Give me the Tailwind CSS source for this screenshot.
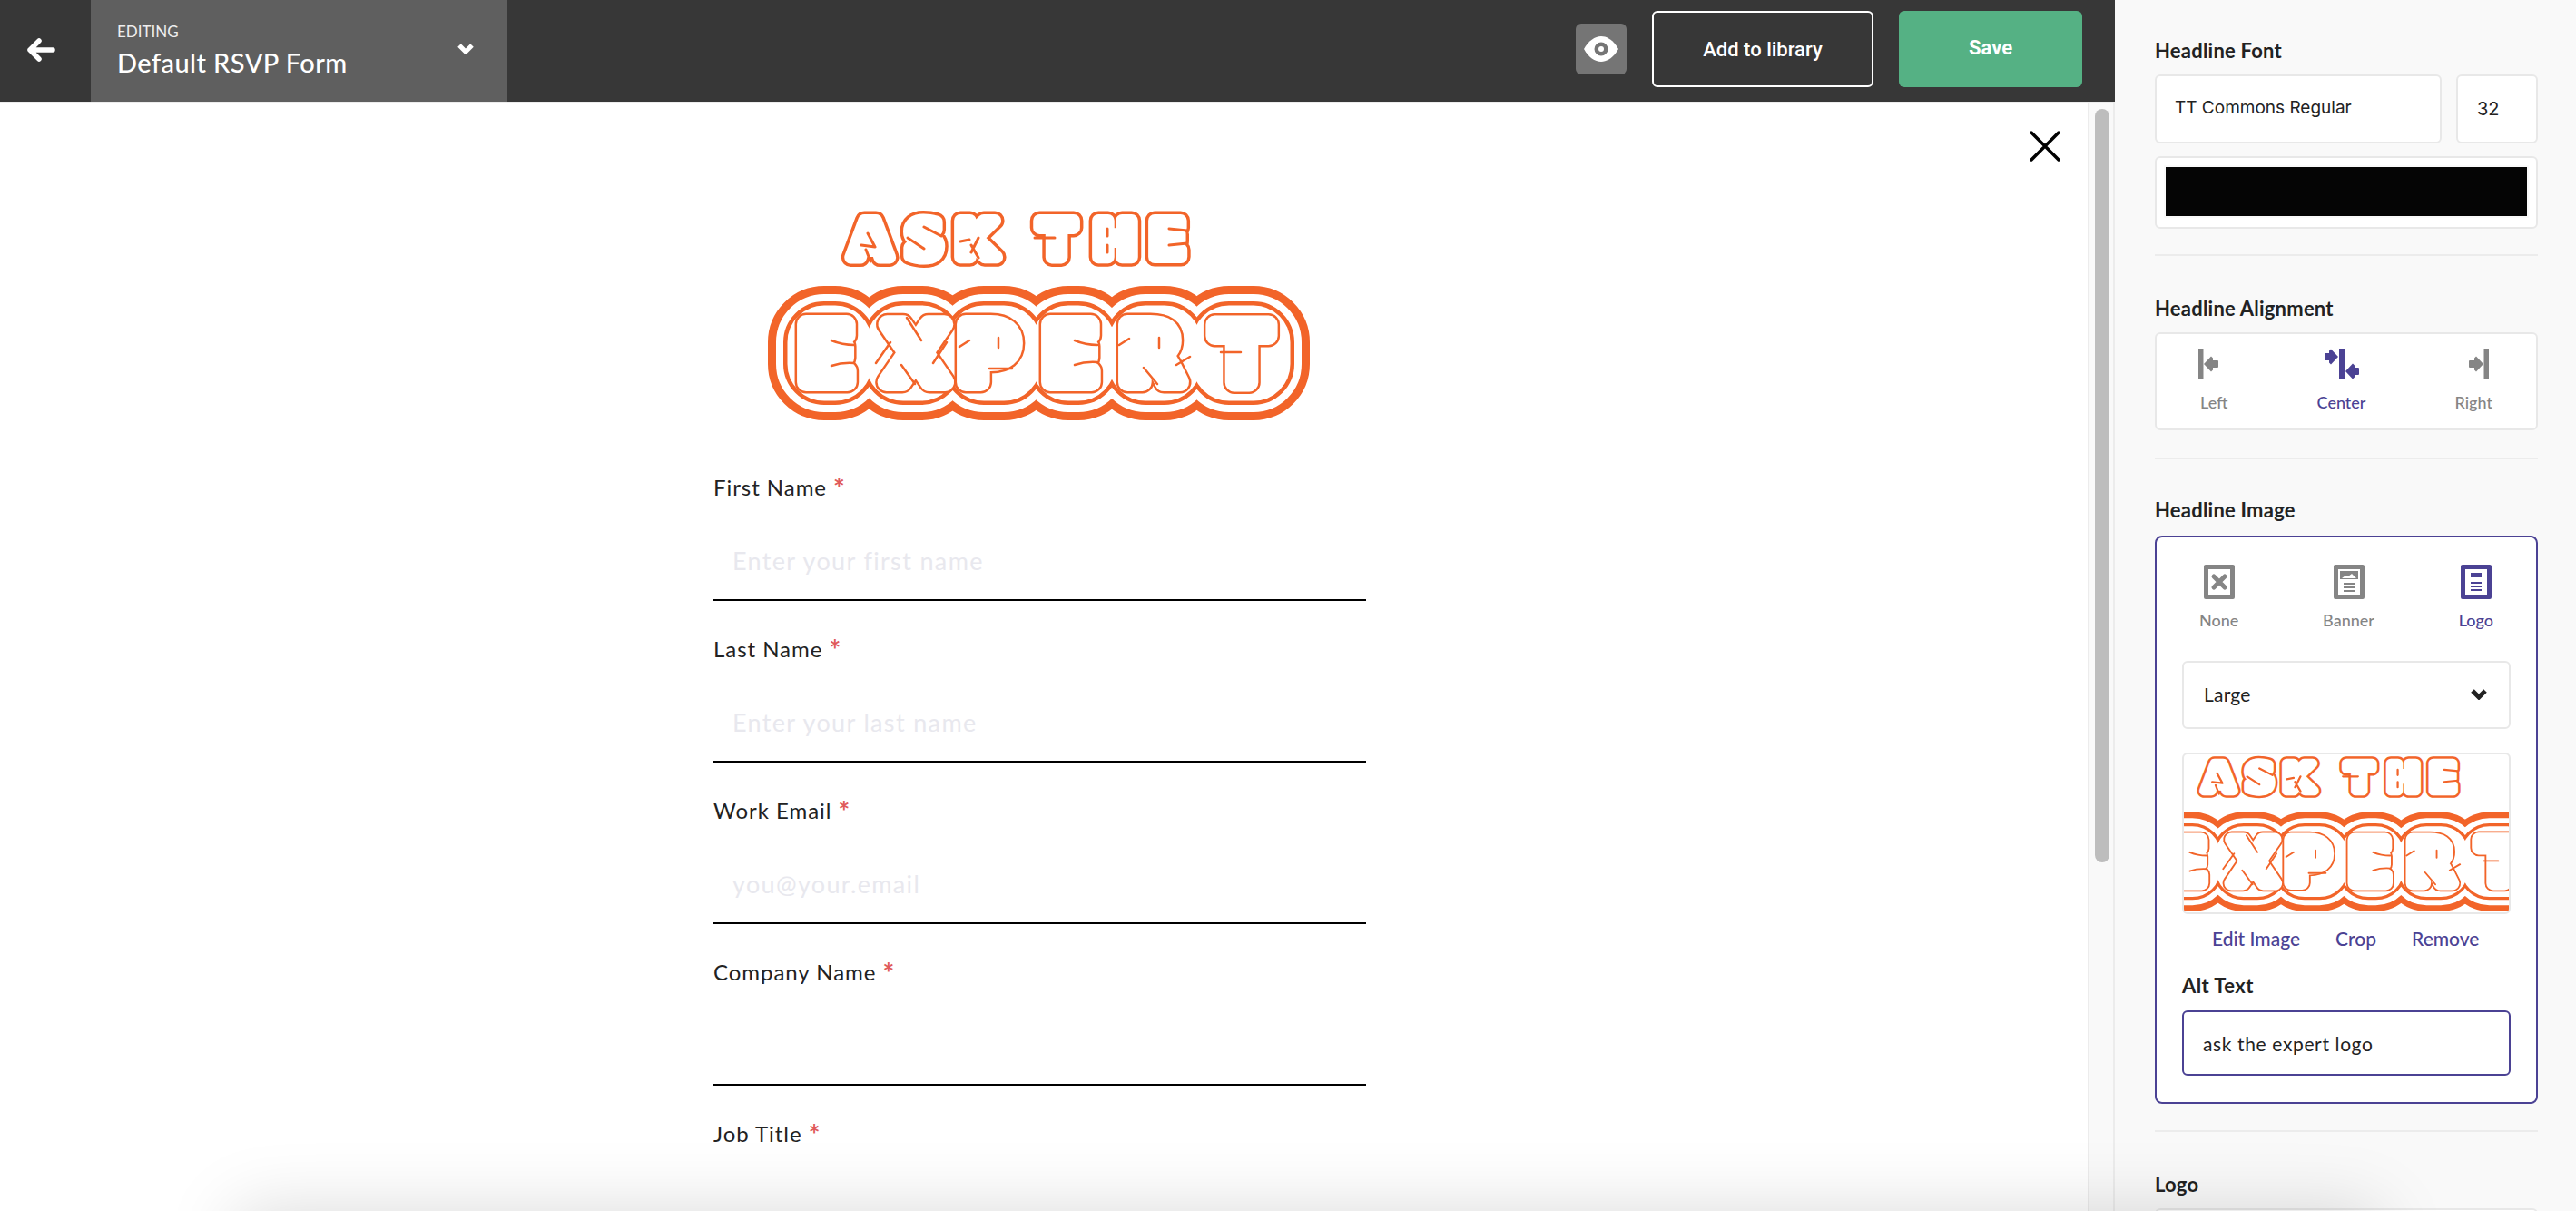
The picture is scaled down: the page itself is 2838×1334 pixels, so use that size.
<!DOCTYPE html>
<html lang="en">

<head>
    <meta charset="UTF-8">
    <title>Default RSVP Form</title>
    <script src="https://cdn.jsdelivr.net/npm/@tailwindcss/browser@4"></script>
</head>

<body class="bg-white">
    <div class="relative flex h-[1334px] w-[2838px] overflow-hidden font-['Lato',sans-serif]">

        <!-- editor column -->
        <div class="flex h-full w-[2330px] flex-col">
            <header class="flex h-[112px] shrink-0 items-center bg-[#373737] text-white">
                <button class="flex h-full w-[100px] items-center justify-center pb-[3px] pr-[11px]">
                    <svg class="h-[26px] w-[32px]" viewBox="0 0 32 26" fill="none" stroke="white" stroke-width="5.5" stroke-linecap="round" stroke-linejoin="round">
                        <path d="M29 13H4M14 3L4 13l10 10" />
                    </svg>
                </button>
                <div class="flex h-full w-[459px] items-center justify-between bg-[#5f5f5f] pl-[29px] pr-[37px]">
                    <div class="mt-[-3px] flex flex-col">
                        <span class="h-[24px] text-[17px] leading-[24px] text-[#eeeeee]">EDITING</span>
                        <span class="mt-[4px] h-[36px] text-[29px] font-medium leading-[36px] tracking-[0.015em]">Default RSVP Form</span>
                    </div>
                    <svg class="mb-[5px] h-[13px] w-[18px]" viewBox="0 0 18 13" fill="none" stroke="white" stroke-width="5">
                        <path d="M2 3l7 7 7-7" />
                    </svg>
                </div>
                <div class="mb-[4px] ml-auto flex items-center pr-[36px]">
                    <button class="flex h-[56px] w-[56px] items-center justify-center rounded-[6px] bg-[#757575]">
                        <svg class="h-[28px] w-[38px]" viewBox="0 0 38 28">
                            <path d="M0 14C5 5 12 0 19 0s14 5 19 14c-5 9-12 14-19 14S5 23 0 14z" fill="white" />
                            <circle cx="19" cy="14" r="7.5" fill="#757575" />
                            <circle cx="19" cy="14" r="3" fill="white" />
                        </svg>
                    </button>
                    <button class="ml-[28px] h-[84px] w-[244px] rounded-[6px] border-2 border-white font-['Roboto',sans-serif] text-[22px] font-medium">Add to library</button>
                    <button class="ml-[28px] h-[84px] w-[202px] rounded-[6px] bg-[#55b184] pb-[3px] font-['Roboto',sans-serif] text-[22px] font-bold">Save</button>
                </div>
            </header>

            <div class="h-[2px] shrink-0 bg-[#ececec]"></div>

            <div class="relative flex min-h-0 flex-1">
                <main class="min-w-0 flex-1 overflow-hidden bg-white">
                    <div class="ml-[786px] w-[719px] pt-[111px]">
                        <svg class="ml-[54px] block h-[245px] w-[610px]" viewBox="840 225 610 245">
                            <defs>
                                <text id="ask-word" y="283" x="937 998 1053 1145 1205 1267" font-size="56" font-weight="700" font-family="DejaVu Sans">ASKTHE</text>
                                <text id="expert-word" y="421" x="880 975 1056 1149 1234 1338" font-size="88" font-weight="700" font-family="DejaVu Sans">EXPERT</text>
                                <g id="expert-bubbles">
                                    <rect x="876" y="345" width="76" height="88" rx="32" />
                                    <rect x="963" y="345" width="84" height="88" rx="32" />
                                    <rect x="1052" y="345" width="86" height="88" rx="32" />
                                    <rect x="1145" y="345" width="75" height="88" rx="32" />
                                    <rect x="1230" y="345" width="85" height="88" rx="32" />
                                    <rect x="1322" y="345" width="91" height="88" rx="32" />
                                </g>
                                <g id="logo-art" stroke-linejoin="round" stroke-linecap="round">
                                    <use href="#ask-word" fill="#f26429" stroke="#f26429" stroke-width="21" />
                                    <use href="#ask-word" fill="white" stroke="white" stroke-width="14" />
                                    <use href="#expert-bubbles" fill="#f26429" stroke="#f26429" stroke-width="60" />
                                    <use href="#expert-bubbles" fill="white" stroke="white" stroke-width="42" />
                                    <use href="#expert-bubbles" fill="#f26429" stroke="#f26429" stroke-width="26" />
                                    <use href="#expert-bubbles" fill="white" stroke="white" stroke-width="17" />
                                    <use href="#expert-word" fill="#f26429" stroke="#f26429" stroke-width="25" />
                                    <use href="#expert-word" fill="white" stroke="white" stroke-width="20" />
                                    <!-- inner slits of the bubble letters -->
                                    <path fill="none" stroke="#f26429" stroke-width="2.5" d="M916 375q12 5 25 5M916 403q12-4 25-3M1015 375l-16-25M981 377l-16 23M1028 400l15-23M993 402l15 21M1068 375l-11 7M1100 372v11M1090 406h25M1184 375q12 5 25 5M1184 402q12-4 25-3M1244 373l-11 7M1277 372v11M1260 405l15 18M1296 402l15-9M1345 388h22" />
                                    <path fill="none" stroke="#f26429" stroke-width="3" d="M956 257l8 15-15-2M954 275l5 13M1018 250l19 10M1000 262l18 12M1058 266l10-2M1078 262l-8 16M1070 270l8 14M1140 262h22M1220 252v8M1220 270v8M1288 252l20 2M1288 270l20-2" />
                                </g>
                            </defs>
                            <use href="#logo-art" />
                        </svg>

                        <form class="mt-[52px] flex flex-col text-[#222222]">
                            <label class="h-[24px] text-[24px] leading-[24px] tracking-[0.04em]">First Name <span class="inline-block translate-y-[3px] text-[30px] font-bold leading-[24px] text-[#e05a5a]">*</span></label>
                            <input type="text" placeholder="Enter your first name" class="mb-[38px] mt-[46px] h-[70px] w-full border-b-2 border-black pb-[18px] pl-[21px] text-[27px] tracking-[0.05em] placeholder:text-[#e8e8ee] focus:outline-none">
                            <label class="h-[24px] text-[24px] leading-[24px] tracking-[0.04em]">Last Name <span class="inline-block translate-y-[3px] text-[30px] font-bold leading-[24px] text-[#e05a5a]">*</span></label>
                            <input type="text" placeholder="Enter your last name" class="mb-[38px] mt-[46px] h-[70px] w-full border-b-2 border-black pb-[18px] pl-[21px] text-[27px] tracking-[0.05em] placeholder:text-[#e8e8ee] focus:outline-none">
                            <label class="h-[24px] text-[24px] leading-[24px] tracking-[0.04em]">Work Email <span class="inline-block translate-y-[3px] text-[30px] font-bold leading-[24px] text-[#e05a5a]">*</span></label>
                            <input type="text" placeholder="you@your.email" class="mb-[38px] mt-[46px] h-[70px] w-full border-b-2 border-black pb-[18px] pl-[21px] text-[27px] tracking-[0.05em] placeholder:text-[#e8e8ee] focus:outline-none">
                            <label class="h-[24px] text-[24px] leading-[24px] tracking-[0.04em]">Company Name <span class="inline-block translate-y-[3px] text-[30px] font-bold leading-[24px] text-[#e05a5a]">*</span></label>
                            <input type="text" class="mb-[38px] mt-[46px] h-[70px] w-full border-b-2 border-black pb-[18px] pl-[21px] text-[27px] focus:outline-none">
                            <label class="h-[24px] text-[24px] leading-[24px] tracking-[0.04em]">Job Title <span class="inline-block translate-y-[3px] text-[30px] font-bold leading-[24px] text-[#e05a5a]">*</span></label>
                        </form>
                    </div>
                </main>

                <!-- close button sits over the form area -->
                <button class="absolute left-[2236px] top-[30px]">
                    <svg class="block h-[34px] w-[34px]" viewBox="0 0 34 34" fill="none" stroke="black" stroke-width="3.5" stroke-linecap="round">
                        <path d="M2 2l30 30M32 2L2 32" />
                    </svg>
                </button>

                <!-- scrollbar -->
                <div class="h-full w-[30px] shrink-0 border-x-2 border-[#ececec] bg-[#f9f9f9] pl-[6px] pt-[6px]">
                    <div class="h-[830px] w-[16px] rounded-full bg-[#bdbdbd]"></div>
                </div>
            </div>
        </div>

        <!-- settings panel -->
        <aside class="w-[508px] shrink-0 bg-[#f9f9f9] pl-[44px] pr-[42px] pt-[44px] text-[#222222]">
            <h3 class="h-[24px] text-[22px] font-bold leading-[24px] tracking-[0.01em]">Headline Font</h3>
            <div class="mt-[14px] flex gap-[16px]">
                <div class="flex h-[76px] w-[316px] items-center rounded-[6px] border-2 border-[#e8e8e8] bg-white pb-[2px] pl-[20px] font-['Inter',sans-serif] text-[19px] text-[#222222]">TT Commons Regular</div>
                <div class="flex h-[76px] w-[90px] items-center rounded-[6px] border-2 border-[#e8e8e8] bg-white pl-[21px] font-['Inter',sans-serif] text-[20px]">32</div>
            </div>
            <div class="mt-[14px] h-[80px] rounded-[6px] border-2 border-[#e8e8e8] bg-white p-[8px]">
                <div class="h-[58px] border-2 border-[#fafafa] bg-[#050505]"></div>
            </div>
            <div class="mt-[28px] h-[2px] bg-[#ececec]"></div>

            <h3 class="mt-[46px] h-[24px] text-[22px] font-bold leading-[24px] tracking-[0.01em]">Headline Alignment</h3>
            <div class="mt-[14px] flex h-[108px] justify-between rounded-[6px] border-2 border-[#e8e8e8] bg-white px-[48px] pt-[16px] text-[18px] font-medium text-[#858585]">
                <div class="flex flex-col items-center">
                    <svg class="h-[34px] w-[22px] -translate-x-[6px]" viewBox="0 0 22 34" fill="#858585">
                        <rect width="5.500" height="34" />
                        <path d="M6 17l8-8.500 2 2V13h5a1 1 0 0 1 1 1v6a1 1 0 0 1-1 1h-5v2.500l-2 2z" />
                    </svg>
                    <span class="mt-[13px] h-[24px] leading-[24px]">Left</span>
                </div>
                <div class="flex flex-col items-center text-[#4b4294]">
                    <svg class="h-[34px] w-[38px]" viewBox="0 0 38 34" fill="#4b4294">
                        <rect x="16" width="6" height="34" />
                        <path d="M15 9L7 .500 5 2.500V5H1a1 1 0 0 0-1 1v6a1 1 0 0 0 1 1h4v2.500l2 2z" />
                        <path d="M23 25l8-8.500 2 2V21h4a1 1 0 0 1 1 1v6a1 1 0 0 1-1 1h-4v2.500l-2 2z" />
                    </svg>
                    <span class="mt-[13px] h-[24px] leading-[24px]">Center</span>
                </div>
                <div class="flex flex-col items-center">
                    <svg class="h-[34px] w-[22px] translate-x-[6px]" viewBox="0 0 22 34" fill="#858585">
                        <rect x="16.500" width="5.500" height="34" />
                        <path d="M16 17L8 8.500l-2 2V13H1a1 1 0 0 0-1 1v6a1 1 0 0 0 1 1h5v2.500l2 2z" />
                    </svg>
                    <span class="mt-[13px] h-[24px] leading-[24px]">Right</span>
                </div>
            </div>
            <div class="mt-[30px] h-[2px] bg-[#ececec]"></div>

            <h3 class="mt-[44px] h-[24px] text-[22px] font-bold leading-[24px] tracking-[0.01em]">Headline Image</h3>
            <div class="mt-[16px] rounded-[8px] border-2 border-[#4b4294] bg-white pb-[29px]">
                <div class="flex justify-between px-[47px] pt-[30px] text-[18px] font-medium text-[#858585]">
                    <div class="flex flex-col items-center">
                        <svg class="h-[38px] w-[34px]" viewBox="0 0 34 38">
                            <rect width="34" height="38" rx="2" fill="#858585" />
                            <rect x="5" y="5" width="24" height="28" fill="white" />
                            <path d="M11 13l12 12M23 13L11 25" stroke="#858585" stroke-width="5" stroke-linecap="round" />
                        </svg>
                        <span class="mt-[11px] h-[24px] leading-[24px]">None</span>
                    </div>
                    <div class="flex flex-col items-center">
                        <svg class="h-[38px] w-[34px]" viewBox="0 0 34 38">
                            <rect width="34" height="38" rx="2" fill="#858585" />
                            <rect x="5" y="5" width="24" height="28" fill="white" />
                            <path d="M7 7h20v9H7z" fill="#858585" />
                            <path d="M9 15l4-3 3 1 4-3 5 5z" fill="white" />
                            <path d="M11 21h12M11 25h12M11 29h12" stroke="#858585" stroke-width="1.800" />
                        </svg>
                        <span class="mt-[11px] h-[24px] leading-[24px]">Banner</span>
                    </div>
                    <div class="flex flex-col items-center text-[#4b4294]">
                        <svg class="h-[38px] w-[34px]" viewBox="0 0 34 38">
                            <rect width="34" height="38" rx="2" fill="#4b4294" />
                            <rect x="5" y="5" width="24" height="28" fill="white" />
                            <rect x="11" y="9" width="12" height="5" fill="#4b4294" />
                            <path d="M11 20h12M11 24h12M11 28h12" stroke="#4b4294" stroke-width="1.800" />
                        </svg>
                        <span class="mt-[11px] h-[24px] leading-[24px]">Logo</span>
                    </div>
                </div>

                <div class="mx-[28px]">
                    <div class="mt-[33px] flex h-[75px] items-center justify-between rounded-[6px] border-2 border-[#e8e8e8] pb-[2px] pl-[22px] pr-[24px] text-[21px]">
                        <span class="tracking-[0.01em]">Large</span>
                        <svg class="h-[13px] w-[18px]" viewBox="0 0 18 13" fill="none" stroke="#222222" stroke-width="5">
                            <path d="M2 3l7 7 7-7" />
                        </svg>
                    </div>

                    <div class="mt-[26px] flex h-[178px] justify-center overflow-hidden rounded-[6px] border-2 border-[#e8e8e8]">
                        <svg class="mt-[-3px] h-[181px] w-[460px] shrink-0" viewBox="840 225 610 245" preserveAspectRatio="none">
                            <use href="#logo-art" />
                        </svg>
                    </div>

                    <div class="mt-[15px] flex h-[24px] gap-[39px] pl-[33px] text-[21px] font-medium leading-[24px] text-[#4b4294]">
                        <a>Edit Image</a>
                        <a>Crop</a>
                        <a>Remove</a>
                    </div>

                    <h4 class="mt-[28px] h-[24px] text-[22px] font-bold leading-[24px] tracking-[0.02em]">Alt Text</h4>
                    <input type="text" value="ask the expert logo" class="mt-[15px] block h-[72px] w-full rounded-[6px] border-2 border-[#4b4294] pl-[21px] text-[21px] tracking-[0.03em] text-[#222222] focus:outline-none">
                </div>
            </div>
            <div class="mt-[29px] h-[2px] bg-[#ececec]"></div>

            <h3 class="mt-[46px] h-[24px] text-[22px] font-bold leading-[24px] tracking-[0.01em]">Logo</h3>
            <div class="mt-[14px] h-[76px] rounded-[6px] border-2 border-[#e8e8e8] bg-white"></div>
        </aside>

        <!-- bottom toolbar is off screen, only its shadow shows -->
        <div class="absolute left-[260px] top-[1334px] h-[100px] w-[2360px] bg-white shadow-[0_0_80px_rgba(0,0,0,0.15)]"></div>
    </div>
</body>

</html>
